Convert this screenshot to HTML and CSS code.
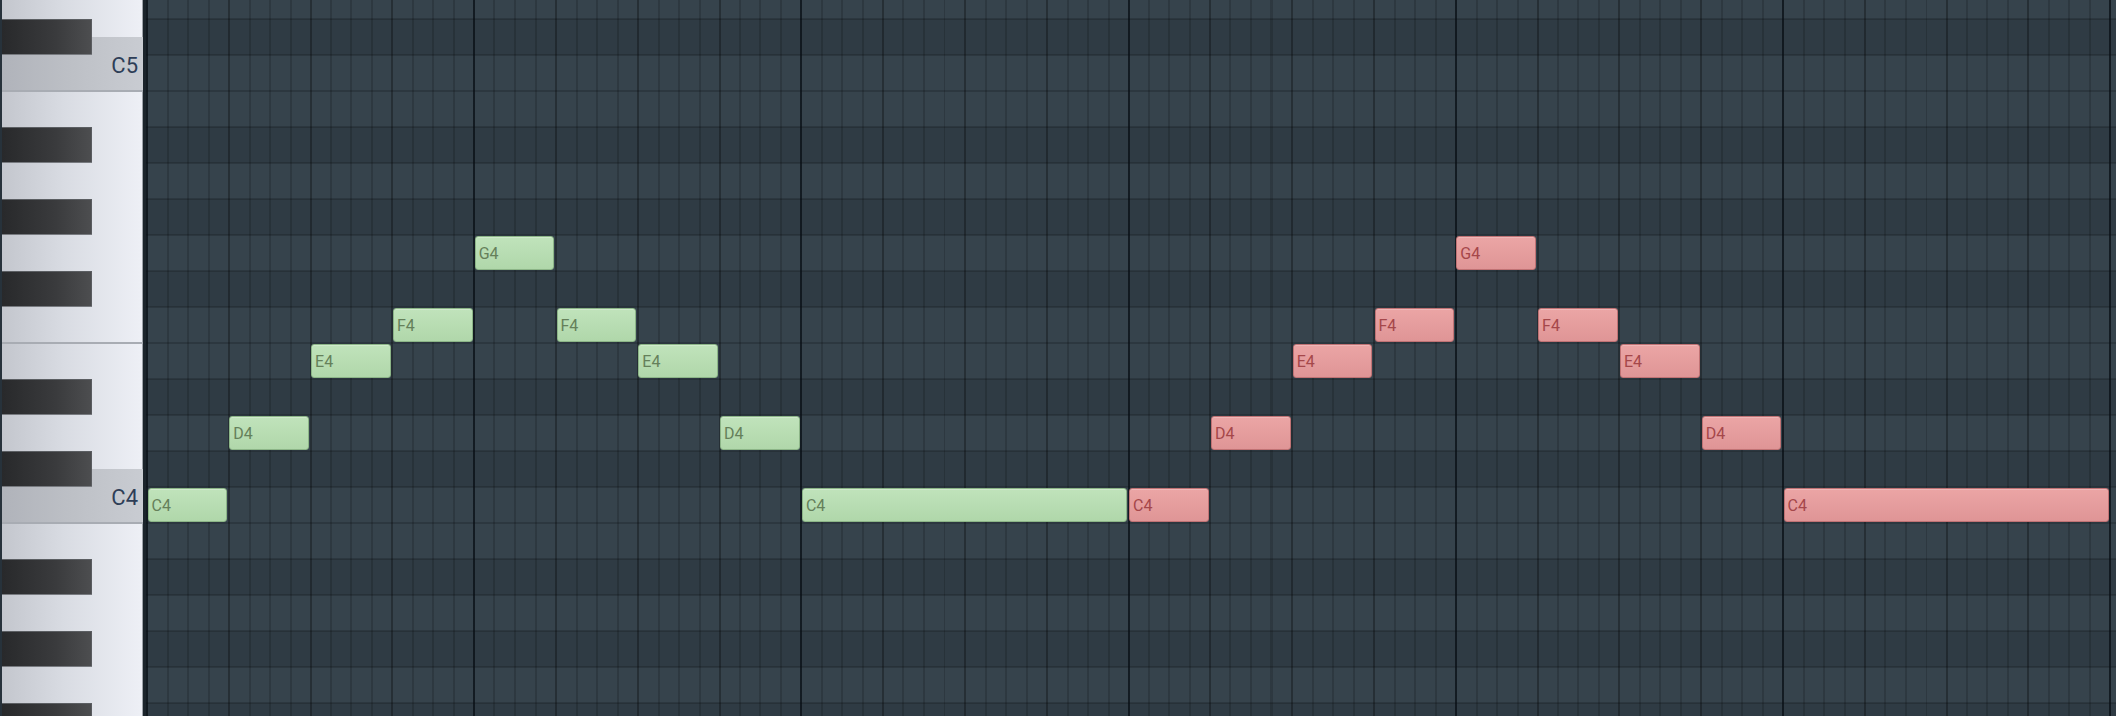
FILE: index.html
```html
<!DOCTYPE html>
<html lang="en">
<head>
<meta charset="utf-8">
<title>Piano Roll</title>
<link rel="stylesheet" href="styles.css">
</head>
<body>
<div class="roll">
  <div class="keys">
    <div class="keys-col">
      <div class="key"></div>
      <div class="key"><div class="bk"></div></div>
      <div class="key c edge"><span class="lbl">C5</span></div>
      <div class="key"></div>
      <div class="key"><div class="bk"></div></div>
      <div class="key"></div>
      <div class="key"><div class="bk"></div></div>
      <div class="key"></div>
      <div class="key"><div class="bk"></div></div>
      <div class="key edge"></div>
      <div class="key"></div>
      <div class="key"><div class="bk"></div></div>
      <div class="key"></div>
      <div class="key"><div class="bk"></div></div>
      <div class="key c edge"><span class="lbl">C4</span></div>
      <div class="key"></div>
      <div class="key"><div class="bk"></div></div>
      <div class="key"></div>
      <div class="key"><div class="bk"></div></div>
      <div class="key"></div>
      <div class="key"><div class="bk"></div></div>
    </div>
  </div>
  <div class="grid">
    <div class="canvas">
      <div class="row"></div>
      <div class="row d"></div>
      <div class="row"></div>
      <div class="row"></div>
      <div class="row d"></div>
      <div class="row"></div>
      <div class="row d"></div>
      <div class="row"></div>
      <div class="row d"></div>
      <div class="row"></div>
      <div class="row"></div>
      <div class="row d"></div>
      <div class="row"></div>
      <div class="row d"></div>
      <div class="row"></div>
      <div class="row"></div>
      <div class="row d"></div>
      <div class="row"></div>
      <div class="row d"></div>
      <div class="row"></div>
      <div class="row d"></div>

      <div class="lines">
        <div class="bar"><div class="beat"></div><div class="beat"></div><div class="beat"></div><div class="beat"></div></div>
        <div class="bar"><div class="beat"></div><div class="beat"></div><div class="beat"></div><div class="beat"></div></div>
        <div class="bar"><div class="beat"></div><div class="beat"></div><div class="beat"></div><div class="beat"></div></div>
        <div class="bar"><div class="beat"></div><div class="beat"></div><div class="beat"></div><div class="beat"></div></div>
        <div class="bar"><div class="beat"></div><div class="beat"></div><div class="beat"></div><div class="beat"></div></div>
        <div class="bar"><div class="beat"></div><div class="beat"></div><div class="beat"></div><div class="beat"></div></div>
        <div class="bar"><div class="beat"></div><div class="beat"></div><div class="beat"></div><div class="beat"></div></div>
      </div>

      <div class="note g" style="--s:0;--r:14;--l:4">C4</div>
      <div class="note g" style="--s:4;--r:12;--l:4">D4</div>
      <div class="note g" style="--s:8;--r:10;--l:4">E4</div>
      <div class="note g" style="--s:12;--r:9;--l:4">F4</div>
      <div class="note g" style="--s:16;--r:7;--l:4">G4</div>
      <div class="note g" style="--s:20;--r:9;--l:4">F4</div>
      <div class="note g" style="--s:24;--r:10;--l:4">E4</div>
      <div class="note g" style="--s:28;--r:12;--l:4">D4</div>
      <div class="note g" style="--s:32;--r:14;--l:16">C4</div>

      <div class="note r" style="--s:48;--r:14;--l:4">C4</div>
      <div class="note r" style="--s:52;--r:12;--l:4">D4</div>
      <div class="note r" style="--s:56;--r:10;--l:4">E4</div>
      <div class="note r" style="--s:60;--r:9;--l:4">F4</div>
      <div class="note r" style="--s:64;--r:7;--l:4">G4</div>
      <div class="note r" style="--s:68;--r:9;--l:4">F4</div>
      <div class="note r" style="--s:72;--r:10;--l:4">E4</div>
      <div class="note r" style="--s:76;--r:12;--l:4">D4</div>
      <div class="note r" style="--s:80;--r:14;--l:16">C4</div>
    </div>
  </div>
</div>
</body>
</html>
```

FILE: styles.css
```css
* {
  box-sizing: border-box;
  margin: 0;
  padding: 0;
}

html, body {
  width: 2116px;
  height: 716px;
}

body {
  background: #303c45;
  overflow: hidden;
  font-family: Roboto, "Liberation Sans", sans-serif;
}

.roll {
  display: flex;
  width: 2116px;
  height: 716px;
  overflow: hidden;
}

/* ---------- keyboard ---------- */
.keys {
  flex: 0 0 146px;
  height: 100%;
  overflow: hidden;
  border-left: 2px solid #27323b;
  border-right: 3px solid #1b242b;
  background: linear-gradient(to right, #c3c6cd 0%, #d9dce3 45%, #eef0f6 100%);
  box-shadow: inset -1px 0 0 #9ea3aa;
}

.keys-col {
  margin-top: -17px;
  display: flex;
  flex-direction: column;
}

.key {
  position: relative;
  flex: none;
  height: 36px;
}

.bk {
  position: relative;
  z-index: 2;
  width: 90px;
  height: 100%;
  background: linear-gradient(to right, #28292b 0%, #3a3b3d 60%, #4d4e50 100%);
  box-shadow: inset 0 -1px 0 #777a7f, inset 0 1px 0 #5b5e62, inset -1px 0 0 #5a5c60;
}

.key.c::before {
  content: "";
  position: absolute;
  left: 0;
  right: 0;
  top: -18px;
  bottom: 0;
  background: linear-gradient(to right, #b0b3ba 0%, #bdc0c6 50%, #c9ccd2 100%);
}

.key.edge::after {
  content: "";
  position: absolute;
  z-index: 1;
  left: 0;
  right: 0;
  bottom: -1px;
  height: 2px;
  background: #a8acb3;
}

.lbl {
  position: relative;
  z-index: 1;
  display: block;
  text-align: right;
  padding-right: 5px;
  font-size: 22px;
  line-height: 22px;
  color: #2e3e57;
}

/* ---------- grid ---------- */
.grid {
  flex: 1;
  height: 100%;
  overflow: hidden;
  position: relative;
}

.canvas {
  position: relative;
  margin-top: -17px;
  width: 2291px;
  height: 756px;
}

.row {
  height: 36px;
  background: #36434c;
  box-shadow: inset 0 1px 0 rgba(0, 0, 0, 0.17), inset 0 -1px 0 rgba(0, 0, 0, 0.17);
}

.row.d {
  background: #2f3b44;
}

.lines {
  position: absolute;
  inset: 0;
  display: flex;
}

.bar {
  flex: 0 0 327.2px;
  display: flex;
}

.beat {
  --b: rgba(0, 0, 0, 0.3);
  --s: rgba(0, 0, 0, 0.16);
  flex: 1;
  background: linear-gradient(to right,
    var(--b) 0 2px,
    transparent 2px 25%,
    var(--s) 25% calc(25% + 2px),
    transparent calc(25% + 2px) 50%,
    var(--s) 50% calc(50% + 2px),
    transparent calc(50% + 2px) 75%,
    var(--s) 75% calc(75% + 2px),
    transparent calc(75% + 2px) 100%);
}

.beat:first-child {
  --b: rgba(6, 12, 18, 0.72);
}

/* ---------- notes ---------- */
.note {
  position: absolute;
  left: calc(var(--s) * 20.45px + 1.5px);
  top: calc(var(--r) * 36px + 1px);
  width: calc(var(--l) * 20.45px - 2px);
  height: 34px;
  border-radius: 3px;
  padding: 1px 0 0 3px;
  font-size: 16px;
  line-height: 31px;
  white-space: nowrap;
  overflow: hidden;
}

.note.g {
  background: linear-gradient(#c0e3bb, #b0d7aa);
  border: 1px solid #8cb587;
  color: #65805a;
  box-shadow: inset 0 1px 0 rgba(255, 255, 255, 0.25);
}

.note.r {
  background: linear-gradient(#eba5a5, #df9596);
  border: 1px solid #c07274;
  color: #a5474a;
  box-shadow: inset 0 1px 0 rgba(255, 255, 255, 0.2);
}
```
